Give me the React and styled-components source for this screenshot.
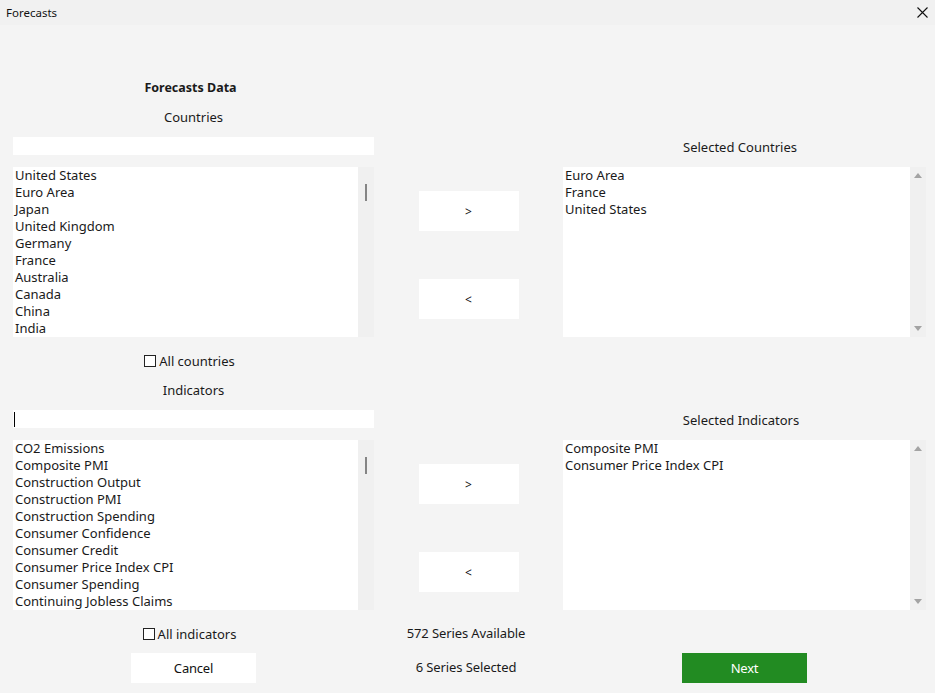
import React from "react";
import styled, { createGlobalStyle } from "styled-components";

const GlobalStyle = createGlobalStyle`
  html, body {
    margin: 0;
    padding: 0;
    background: #f4f4f4;
  }
  body {
    font-family: "Noto Sans", "Liberation Sans", sans-serif;
    color: #1a1a1a;
  }
`;

const Window = styled.div`
  width: 935px;
  height: 693px;
  background: #f4f4f4;
  overflow: hidden;
`;

const TitleBar = styled.div`
  height: 25px;
  display: flex;
  align-items: center;
  justify-content: space-between;
  padding: 0 5px 0 6px;
  background: #f1f1f1;
  font-size: 11.5px;
  color: #111;
`;

const CloseButton = styled.button`
  border: none;
  background: transparent;
  padding: 0;
  width: 16px;
  height: 16px;
  display: flex;
  align-items: center;
  justify-content: center;
  cursor: pointer;
`;

const Body = styled.div`
  display: grid;
  grid-template-columns: 361px 189px 363px;
  grid-template-rows: 20px 20px 20px 170px 23px 20px 20px 170px 23px 30px;
  row-gap: 10px;
  padding: 52px 9px 0 13px;
  font-size: 13px;
`;

const Heading = styled.div`
  grid-column: 1;
  grid-row: ${(p) => p.$row};
  text-align: center;
  font-weight: bold;
  font-size: 12.5px;
  line-height: 20px;
  padding: 1px 6px 0 0;
`;

const Label = styled.div`
  grid-column: ${(p) => p.$col};
  grid-row: ${(p) => p.$row};
  text-align: center;
  line-height: 20px;
  padding-right: ${(p) => p.$shift || 0}px;
  align-self: ${(p) => p.$align || "center"};
`;

const SearchInput = styled.div`
  grid-column: 1;
  grid-row: ${(p) => p.$row};
  height: 18px;
  background: #fff;
  align-self: start;
  position: relative;
`;

const Caret = styled.span`
  position: absolute;
  left: 1px;
  top: 2px;
  width: 1px;
  height: 15px;
  background: #000;
`;

const ListBox = styled.div`
  grid-column: ${(p) => p.$col};
  grid-row: ${(p) => p.$row};
  display: flex;
  background: #fff;
  overflow: hidden;
`;

const Items = styled.ul`
  flex: 1;
  list-style: none;
  margin: 0;
  padding: 0 0 0 2px;
`;

const Item = styled.li`
  line-height: 17px;
  white-space: nowrap;
`;

const ScrollTrack = styled.div`
  width: 16px;
  background: #f0f0f0;
  display: flex;
  flex-direction: column;
  align-items: center;
  justify-content: ${(p) => (p.$arrows ? "space-between" : "flex-start")};
  padding: ${(p) => (p.$arrows ? "6px 0 6px" : "17px 0 0")};
  box-sizing: border-box;
`;

const Thumb = styled.div`
  width: 2px;
  height: 17px;
  background: #858585;
`;

const Arrow = styled.div`
  width: 0;
  height: 0;
  border-left: 4px solid transparent;
  border-right: 4px solid transparent;
  ${(p) =>
    p.$down
      ? "border-top: 5px solid #a3a3a3;"
      : "border-bottom: 5px solid #a3a3a3;"}
`;

const MoveButtons = styled.div`
  grid-column: 2;
  grid-row: ${(p) => p.$row};
  display: flex;
  flex-direction: column;
  align-items: center;
  gap: 48px;
  padding-top: 24px;
`;

const MoveButton = styled.button`
  width: 100px;
  height: 40px;
  border: none;
  background: #fff;
  font-family: inherit;
  font-size: 12px;
  color: #111;
  cursor: pointer;
`;

const CheckRow = styled.label`
  grid-column: 1;
  grid-row: ${(p) => p.$row};
  align-self: end;
  display: flex;
  justify-content: center;
  align-items: center;
  gap: 3px;
  height: 20px;
  padding: 2px 8px 0 0;
  box-sizing: border-box;
`;

const CheckBox = styled.span`
  width: 10px;
  height: 10px;
  border: 1px solid #222;
  background: #fff;
`;

const Status = styled.div`
  grid-column: 2;
  grid-row: ${(p) => p.$row};
  text-align: center;
  align-self: ${(p) => p.$align || "center"};
  line-height: 20px;
  font-size: 13px;
  letter-spacing: -0.1px;
  padding: 0 5px ${(p) => p.$lift || 0}px 0;
`;

const ActionButton = styled.button`
  grid-column: ${(p) => p.$col};
  grid-row: ${(p) => p.$row};
  justify-self: center;
  width: 125px;
  height: 30px;
  padding-bottom: 2px;
  border: none;
  font-family: inherit;
  font-size: 13px;
  letter-spacing: -0.2px;
  cursor: pointer;
  background: ${(p) => (p.$primary ? "#228b22" : "#fff")};
  color: ${(p) => (p.$primary ? "#fff" : "#111")};
`;

const countries = [
  "United States",
  "Euro Area",
  "Japan",
  "United Kingdom",
  "Germany",
  "France",
  "Australia",
  "Canada",
  "China",
  "India",
];

const indicators = [
  "CO2 Emissions",
  "Composite PMI",
  "Construction Output",
  "Construction PMI",
  "Construction Spending",
  "Consumer Confidence",
  "Consumer Credit",
  "Consumer Price Index CPI",
  "Consumer Spending",
  "Continuing Jobless Claims",
];

const selectedCountries = ["Euro Area", "France", "United States"];
const selectedIndicators = ["Composite PMI", "Consumer Price Index CPI"];

function List({ items, col, row, arrows }) {
  return (
    <ListBox $col={col} $row={row}>
      <Items>
        {items.map((it) => (
          <Item key={it}>{it}</Item>
        ))}
      </Items>
      <ScrollTrack $arrows={arrows}>
        {arrows ? (
          <>
            <Arrow />
            <Arrow $down />
          </>
        ) : (
          <Thumb />
        )}
      </ScrollTrack>
    </ListBox>
  );
}

export default function App() {
  return (
    <Window>
      <GlobalStyle />
      <TitleBar>
        <span>Forecasts</span>
        <CloseButton aria-label="Close">
          <svg width="11" height="11" viewBox="0 0 11 11">
            <path d="M0.5 0.5 L10.5 10.5 M10.5 0.5 L0.5 10.5" stroke="#111" strokeWidth="1.1" />
          </svg>
        </CloseButton>
      </TitleBar>
      <Body>
        <Heading $row={1}>Forecasts Data</Heading>

        <Label $col={1} $row={2}>Countries</Label>
        <SearchInput $row={3} />
        <Label $col={3} $row={3} $align="start" $shift={9}>Selected Countries</Label>
        <List items={countries} col={1} row={4} />
        <MoveButtons $row={4}>
          <MoveButton>&gt;</MoveButton>
          <MoveButton>&lt;</MoveButton>
        </MoveButtons>
        <List items={selectedCountries} col={3} row={4} arrows />
        <CheckRow $row={5}>
          <CheckBox />
          All countries
        </CheckRow>

        <Label $col={1} $row={6}>Indicators</Label>
        <SearchInput $row={7}>
          <Caret />
        </SearchInput>
        <Label $col={3} $row={7} $align="start" $shift={7}>Selected Indicators</Label>
        <List items={indicators} col={1} row={8} />
        <MoveButtons $row={8}>
          <MoveButton>&gt;</MoveButton>
          <MoveButton>&lt;</MoveButton>
        </MoveButtons>
        <List items={selectedIndicators} col={3} row={8} arrows />
        <CheckRow $row={9}>
          <CheckBox />
          All indicators
        </CheckRow>
        <Status $row={9} $align="end">572 Series Available</Status>

        <ActionButton $col={1} $row={10}>Cancel</ActionButton>
        <Status $row={10} $lift={3}>6 Series Selected</Status>
        <ActionButton $col={3} $row={10} $primary>Next</ActionButton>
      </Body>
    </Window>
  );
}
